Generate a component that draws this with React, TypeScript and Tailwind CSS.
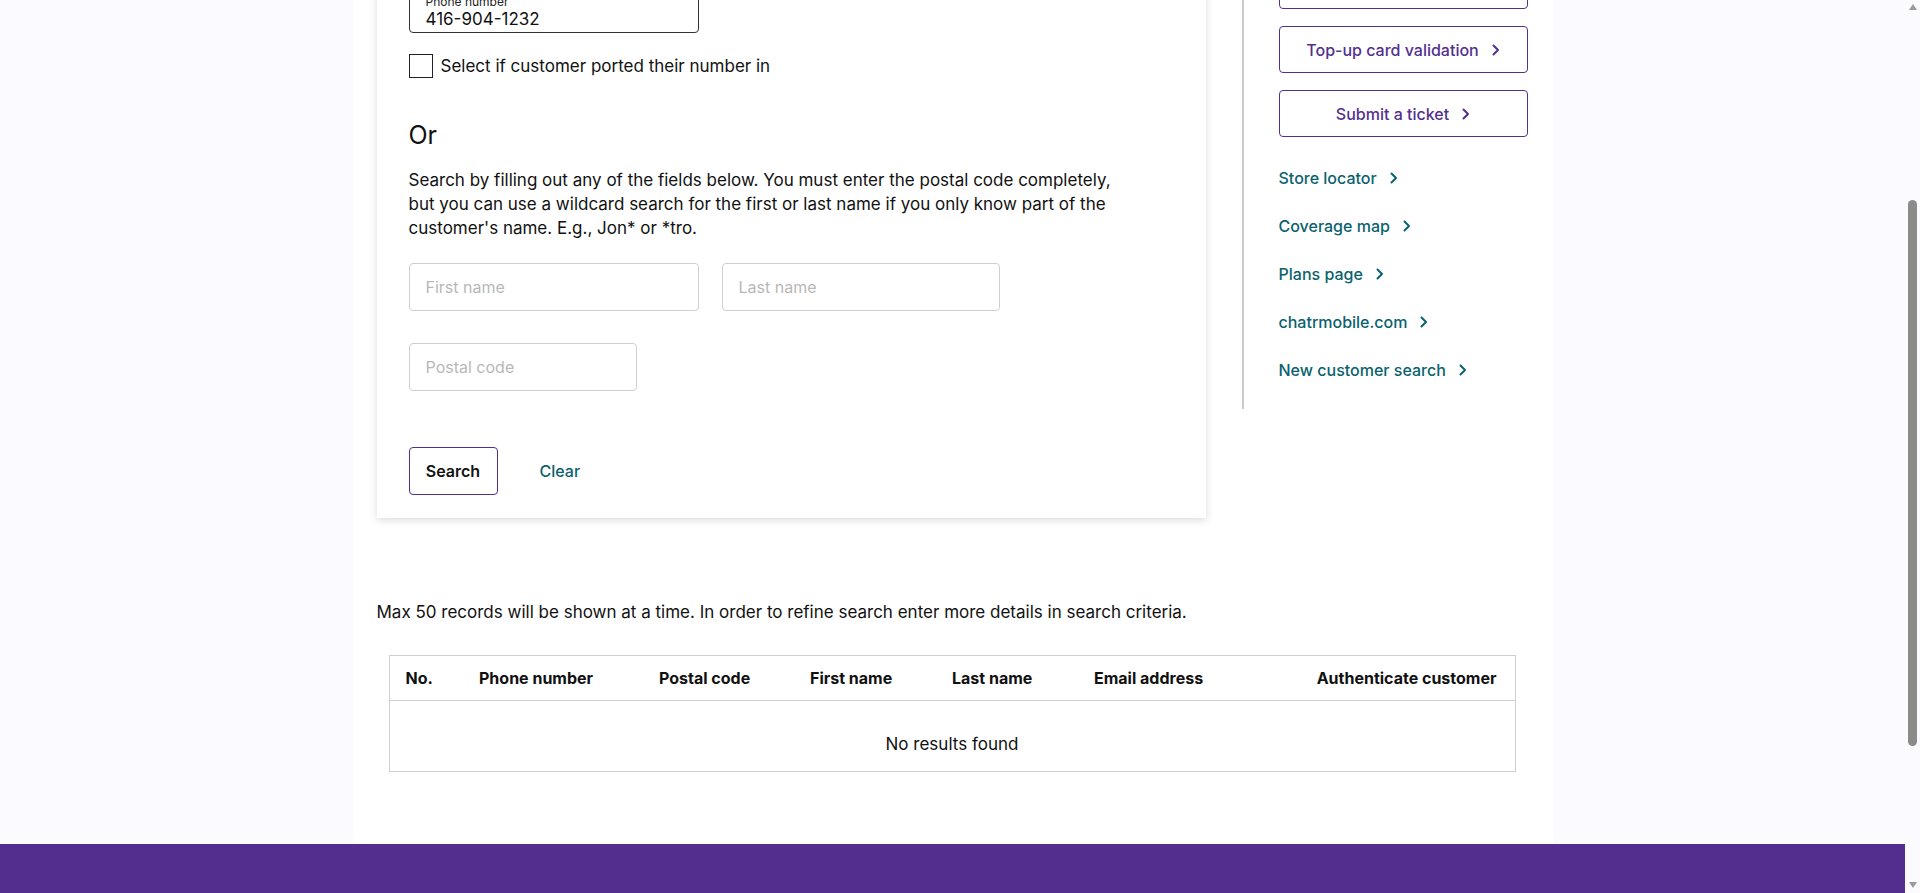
import React from 'react';

const font = { fontFamily: 'Inter, "Open Sans", sans-serif' };

const Chevron = () => (
  <svg width="8" height="12" viewBox="0 0 8 12" fill="none" className="shrink-0">
    <path d="M1.5 1.5L6 6l-4.5 4.5" stroke="currentColor" strokeWidth="2" strokeLinecap="round" strokeLinejoin="round" />
  </svg>
);

// first button sits above the fold, only its bottom edge shows
const sideButtons = ['', 'Top-up card validation', 'Submit a ticket'];
const sideLinks = ['Store locator', 'Coverage map', 'Plans page', 'chatrmobile.com', 'New customer search'];

const columns = [
  { label: 'No.', width: 'w-[74px]' },
  { label: 'Phone number', width: 'w-[180px]' },
  { label: 'Postal code', width: 'w-[151px]' },
  { label: 'First name', width: 'w-[142px]' },
  { label: 'Last name', width: 'w-[142px]' },
  { label: 'Email address', width: 'w-[220px]' },
];

const SearchCard: React.FC = () => (
  <div className="w-[829px] shrink-0 -mt-[15px] bg-white px-8 pb-[23px] shadow-[0_2px_8px_rgba(0,0,0,0.15)]">
    {/* phone number field (filled) */}
    <div className="w-[290px] h-[48px] border border-[#333] rounded-[4px] px-4 pt-[10px]">
      <div className="text-[12px] leading-none text-[#222]">Phone number</div>
      <div className="text-[17px] leading-[22px] text-[#111]">416-904-1232</div>
    </div>

    <label className="flex items-center mt-[21px]">
      <span className="w-[24px] h-[24px] border-[1.5px] border-[#222] bg-white" />
      <span className="ml-2 text-[17px] leading-6 text-[#111]">Select if customer ported their number in</span>
    </label>

    <h3 className="mt-[41px] text-[25px] leading-8 text-[#111]">Or</h3>

    <p className="mt-[17px] w-[740px] text-[17px] leading-6 text-[#111]">
      Search by filling out any of the fields below. You must enter the postal code completely,
      <br />
      but you can use a wildcard search for the first or last name if you only know part of the
      <br />
      customer's name. E.g., Jon* or *tro.
    </p>

    <div className="flex gap-[23px] mt-[23px]">
      <input
        className="w-[290px] h-[48px] border border-[#cfcfcf] rounded-[4px] px-4 text-[16px] placeholder:text-[#b8b8b8] outline-none"
        placeholder="First name"
      />
      <input
        className="w-[278px] h-[48px] border border-[#cfcfcf] rounded-[4px] px-4 text-[16px] placeholder:text-[#b8b8b8] outline-none"
        placeholder="Last name"
      />
    </div>
    <input
      className="block mt-[32px] w-[228px] h-[48px] border border-[#cfcfcf] rounded-[4px] px-4 text-[16px] placeholder:text-[#b8b8b8] outline-none"
      placeholder="Postal code"
    />

    <div className="flex items-center mt-[56px]">
      <button className="w-[89px] h-[48px] border border-[#53308f] rounded-[4px] text-[16px] font-semibold text-[#111]">
        Search
      </button>
      <button className="ml-[42px] text-[16px] font-medium text-[#0a626e]">Clear</button>
    </div>
  </div>
);

const Sidebar: React.FC = () => (
  <div className="ml-[36px] -mt-[38px] border-l-2 border-[#cacaca] pl-[35px] pb-[27px]">
    <div className="flex flex-col gap-[17px]">
      {sideButtons.map((b, i) => (
        <button
          key={i}
          className="w-[249px] h-[47px] border border-[#53308f] rounded-[4px] flex items-center justify-center gap-[13px] text-[16px] font-medium text-[#53308f]"
        >
          {b && (
            <>
              {b}
              <Chevron />
            </>
          )}
        </button>
      ))}
    </div>
    <div className="flex flex-col gap-6 mt-[29px]">
      {sideLinks.map((l) => (
        <a key={l} className="flex items-center gap-[13px] h-6 text-[16px] font-medium text-[#0a626e]">
          {l}
          <Chevron />
        </a>
      ))}
    </div>
  </div>
);

const ResultsTable: React.FC = () => (
  <table className="mx-3 mt-[31px] w-[1127px] table-fixed border-collapse border border-[#cfcfcf] text-[16px] text-[#111]">
    <thead>
      <tr className="h-[45px] border-b border-[#cfcfcf]">
        {columns.map((c) => (
          <th key={c.label} className={`${c.width} pl-4 text-left font-bold`}>
            {c.label}
          </th>
        ))}
        <th className="pr-[18px] text-right font-bold">Authenticate customer</th>
      </tr>
    </thead>
    <tbody>
      <tr className="h-[71px]">
        <td colSpan={7} className="align-top text-center pt-[31px] leading-6 text-[17px]">
          No results found
        </td>
      </tr>
    </tbody>
  </table>
);

const Scrollbar: React.FC = () => (
  <div className="w-[15px] h-[893px] bg-[#fbfaff] flex flex-col items-center pt-[4px] pb-[5px]">
    <div className="w-0 h-0 border-x-[4.5px] border-x-transparent border-b-[6px] border-b-[#9a9a9a]" />
    <div className="mt-[190px] w-[9px] h-[546px] rounded-full bg-[#8b8b8b]" />
    <div className="flex-1" />
    <div className="w-0 h-0 border-x-[4.5px] border-x-transparent border-t-[6px] border-t-[#9a9a9a]" />
  </div>
);

const App: React.FC = () => {
  return (
    <div className="flex w-[1920px] h-[893px] overflow-hidden bg-[#fbfaff]" style={font}>
      <div className="w-[1905px] h-[893px] flex flex-col">
        <main className="w-[1200px] mx-auto flex-1 bg-white px-6 overflow-hidden">
          <div className="flex items-start">
            <SearchCard />
            <Sidebar />
          </div>

          <p className="mt-[82px] text-[17px] leading-6 text-[#111]">
            Max 50 records will be shown at a time. In order to refine search enter more details in search criteria.
          </p>

          <ResultsTable />
        </main>
        <footer className="h-[49px] bg-[#532e8f]" />
      </div>
      <Scrollbar />
    </div>
  );
};

export default App;
